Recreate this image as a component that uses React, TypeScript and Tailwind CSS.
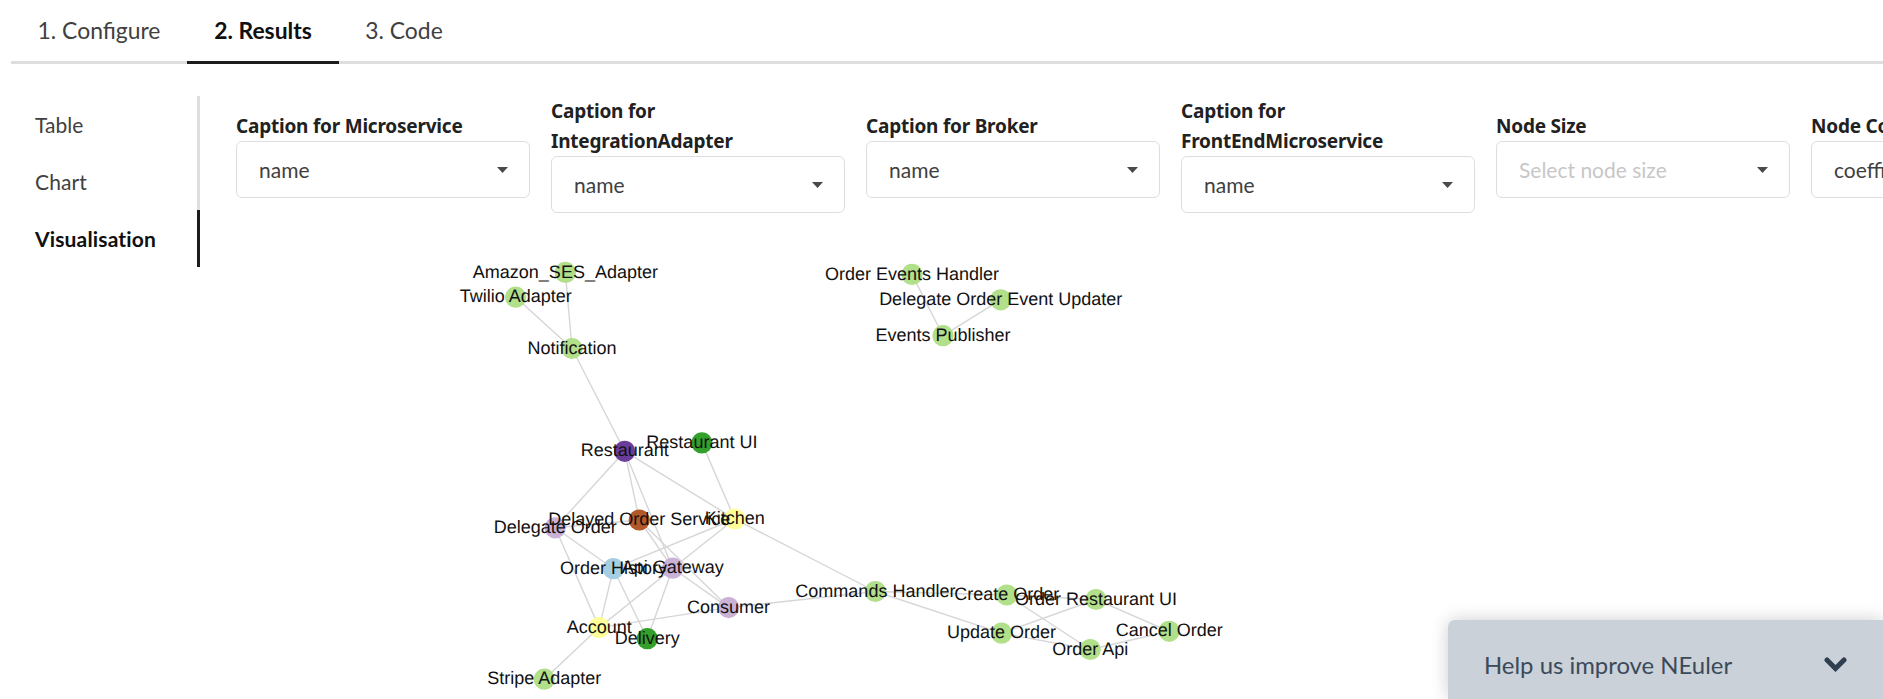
import React from "react";

type GraphNode = { id: string; x: number; y: number; color: string };

const GREEN = "#b2df8a";
const DARK_GREEN = "#33a02c";
const LILAC = "#cab2d6";
const YELLOW = "#ffff99";

const nodes: GraphNode[] = [
  { id: "Amazon_SES_Adapter", x: 565.4, y: 272.4, color: GREEN },
  { id: "Twilio Adapter", x: 515.7, y: 297.2, color: GREEN },
  { id: "Notification", x: 572, y: 348.5, color: GREEN },
  { id: "Restaurant", x: 624.7, y: 451.3, color: "#6a3d9a" },
  { id: "Restaurant UI", x: 701.9, y: 442.9, color: DARK_GREEN },
  { id: "Delayed Order Service", x: 639.3, y: 520, color: "#b15928" },
  { id: "Kitchen", x: 734.7, y: 519, color: YELLOW },
  { id: "Delegate Order", x: 555.2, y: 527.8, color: LILAC },
  { id: "Order History", x: 613.4, y: 568.7, color: "#a6cee3" },
  { id: "Api Gateway", x: 672.7, y: 568.2, color: LILAC },
  { id: "Consumer", x: 728.6, y: 607.6, color: LILAC },
  { id: "Account", x: 599.2, y: 627.6, color: YELLOW },
  { id: "Delivery", x: 647.3, y: 638.7, color: DARK_GREEN },
  { id: "Stripe Adapter", x: 544.3, y: 679.2, color: GREEN },
  { id: "Order Events Handler", x: 912, y: 274.4, color: GREEN },
  { id: "Delegate Order Event Updater", x: 1000.7, y: 299.8, color: GREEN },
  { id: "Events Publisher", x: 943, y: 335.7, color: GREEN },
  { id: "Commands Handler", x: 875.4, y: 591.5, color: GREEN },
  { id: "Create Order", x: 1006.8, y: 595, color: GREEN },
  { id: "Update Order", x: 1001.6, y: 633.2, color: GREEN },
  { id: "Order Restaurant UI", x: 1096, y: 599.5, color: GREEN },
  { id: "Cancel Order", x: 1169.2, y: 631.3, color: GREEN },
  { id: "Order Api", x: 1090.2, y: 649.5, color: GREEN },
];

const edges: [string, string][] = [
  ["Amazon_SES_Adapter", "Notification"],
  ["Twilio Adapter", "Notification"],
  ["Notification", "Restaurant"],
  ["Restaurant", "Delegate Order"],
  ["Restaurant", "Delayed Order Service"],
  ["Restaurant", "Api Gateway"],
  ["Restaurant", "Kitchen"],
  ["Restaurant UI", "Kitchen"],
  ["Delegate Order", "Delayed Order Service"],
  ["Delegate Order", "Order History"],
  ["Delegate Order", "Account"],
  ["Delayed Order Service", "Api Gateway"],
  ["Delayed Order Service", "Consumer"],
  ["Kitchen", "Order History"],
  ["Kitchen", "Api Gateway"],
  ["Kitchen", "Commands Handler"],
  ["Order History", "Account"],
  ["Order History", "Delivery"],
  ["Api Gateway", "Account"],
  ["Api Gateway", "Consumer"],
  ["Api Gateway", "Delivery"],
  ["Account", "Consumer"],
  ["Account", "Stripe Adapter"],
  ["Consumer", "Commands Handler"],
  ["Commands Handler", "Create Order"],
  ["Commands Handler", "Update Order"],
  ["Create Order", "Order Restaurant UI"],
  ["Create Order", "Order Api"],
  ["Update Order", "Order Restaurant UI"],
  ["Update Order", "Order Api"],
  ["Order Restaurant UI", "Cancel Order"],
  ["Cancel Order", "Order Api"],
  ["Order Events Handler", "Events Publisher"],
  ["Delegate Order Event Updater", "Events Publisher"],
];

const byId = new Map(nodes.map((n) => [n.id, n]));

const GRAPH_LEFT = 236;
const GRAPH_TOP = 213;

function Graph() {
  return (
    <svg
      className="block shrink-0"
      width={1647}
      height={486}
      viewBox={`${GRAPH_LEFT} ${GRAPH_TOP} 1647 486`}
      fontFamily="'Liberation Sans', Arial, sans-serif"
      fontSize={18}
      textRendering="geometricPrecision"
    >
      {edges.map(([a, b]) => {
        const from = byId.get(a)!;
        const to = byId.get(b)!;
        return (
          <line key={`${a}-${b}`} x1={from.x} y1={from.y} x2={to.x} y2={to.y} stroke="#d6d6d6" strokeWidth={1.4} />
        );
      })}
      {nodes.map((n) => (
        <circle key={n.id} cx={n.x} cy={n.y} r={10.6} fill={n.color} />
      ))}
      {nodes.map((n) => (
        <text key={n.id} x={n.x} y={Math.round(n.y + 5.1)} textAnchor="middle" fill="#111111">
          {n.id}
        </text>
      ))}
    </svg>
  );
}

function Select({ label, value, placeholder }: { label: string; value?: string; placeholder?: string }) {
  return (
    <div className="w-[294px] shrink-0">
      <div className="pr-4 font-['Noto_Sans',sans-serif] text-[19px] font-bold leading-[30px] tracking-[-0.22px] text-[#212121]">
        {label}
      </div>
      <div className="flex h-[57px] items-center justify-between rounded-[6px] border border-[#dedede] pl-[22px] pr-[21px] text-[21px]">
        {value ? (
          <span className="text-[#404040]">{value}</span>
        ) : (
          <span className="text-[#c7c7c7]">{placeholder}</span>
        )}
        <svg width="11" height="6" viewBox="0 0 11 6" className="shrink-0">
          <path d="M0 0h11L5.5 6z" fill="#4a4a4a" />
        </svg>
      </div>
    </div>
  );
}

export default function App() {
  return (
    <div className="relative flex h-[699px] w-full flex-col overflow-hidden bg-white font-['Lato',sans-serif]">
      <nav className="ml-[11px] flex h-16 shrink-0 border-b-[3px] border-[#dedede] text-[22.9px] text-[#404040]">
        <div className="flex h-16 w-[176px] items-center justify-center border-b-[3px] border-[#dedede]">1. Configure</div>
        <div className="flex h-16 w-[152px] items-center justify-center border-b-[3px] border-[#1b1c1d] font-bold text-[#101010]">
          2. Results
        </div>
        <div className="flex h-16 w-[130px] items-center justify-center border-b-[3px] border-[#dedede]">3. Code</div>
      </nav>
      <div className="flex min-h-0 flex-1 pt-8">
        <aside className="flex w-[200px] shrink-0 flex-col text-[21px] text-[#404040]">
          <div className="flex h-[57px] items-center border-r-[3px] border-[#dedede] pl-[35px]">Table</div>
          <div className="flex h-[57px] items-center border-r-[3px] border-[#dedede] pl-[35px] tracking-[0.1px]">Chart</div>
          <div className="flex h-[57px] items-center border-r-[3px] border-[#1b1c1d] pl-[35px] font-bold tracking-[0.15px] text-[#101010]">
            Visualisation
          </div>
        </aside>
        <main className="ml-9 flex min-w-0 flex-1 flex-col overflow-hidden">
          <div className="flex h-[117px] shrink-0 items-center gap-[21px]">
            <Select label="Caption for Microservice" value="name" />
            <Select label="Caption for IntegrationAdapter" value="name" />
            <Select label="Caption for Broker" value="name" />
            <Select label="Caption for FrontEndMicroservice" value="name" />
            <Select label="Node Size" placeholder="Select node size" />
            <Select label="Node Color" value="coefficient" />
          </div>
          <Graph />
        </main>
      </div>
      <div className="absolute bottom-0 right-0 flex h-[79px] w-[435px] items-center justify-between rounded-tl-[7px] bg-[#cad1d9] pl-9 pr-9 pt-[10px] text-[23.9px] text-[#3b4a59] shadow-[0_0_18px_rgba(0,0,0,0.2)]">
        <span>Help us improve NEuler</span>
        <svg width="23" height="15" viewBox="0 0 23 15">
          <path d="M3 3l8.5 8.5L20 3" fill="none" stroke="#2f3f4f" strokeWidth="5" strokeLinecap="round" />
        </svg>
      </div>
    </div>
  );
}
